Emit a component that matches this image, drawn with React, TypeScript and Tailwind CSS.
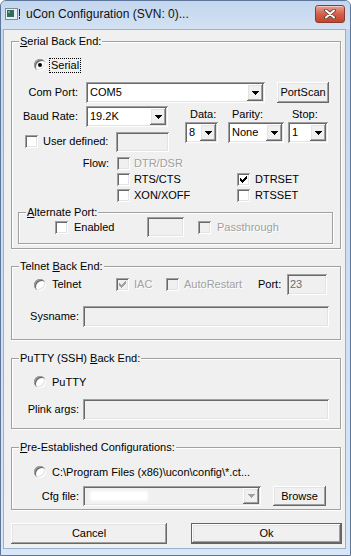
import type { ReactNode } from "react";

const SUNKEN =
  "shadow-[inset_1px_1px_0_#a0a0a0,inset_-1px_-1px_0_#ffffff,inset_2px_2px_0_#696969,inset_-2px_-2px_0_#e3e3e3]";
const RAISED =
  "shadow-[inset_-1px_-1px_0_#696969,inset_1px_1px_0_#ffffff,inset_-2px_-2px_0_#a0a0a0,inset_2px_2px_0_#e3e3e3]";
const GRAYED = "text-[#a0a0a0] [text-shadow:1px_1px_0_#ffffff]";

function Group({
  label,
  className,
  children,
}: {
  label: ReactNode;
  className: string;
  children?: ReactNode;
}) {
  return (
    <div
      className={`relative shrink-0 border border-[#a0a0a0] shadow-[inset_1px_1px_0_#ffffff,1px_1px_0_#ffffff] ${className}`}
    >
      <span className="absolute -top-[7px] left-[7px] bg-[#f0f0f0] px-[1px] leading-[13px] whitespace-nowrap">
        {label}
      </span>
      {children}
    </div>
  );
}

function Radio({ checked }: { checked?: boolean }) {
  return (
    <span
      className={`flex h-[12px] w-[12px] shrink-0 items-center justify-center rounded-full bg-white ${SUNKEN}`}
    >
      {checked && <span className="h-[4px] w-[4px] rounded-full bg-black" />}
    </span>
  );
}

function Check({ checked, disabled }: { checked?: boolean; disabled?: boolean }) {
  return (
    <span
      className={`flex h-[13px] w-[13px] shrink-0 items-center justify-center ${
        disabled ? "bg-[#f0f0f0]" : "bg-white"
      } ${SUNKEN}`}
    >
      {checked && (
        <svg width="7" height="7" viewBox="0 0 7 7" shapeRendering="crispEdges">
          <path
            d="M6 0h1v1h-1z M5 1h2v1h-2z M0 2h1v1h-1z M4 2h3v1h-3z M0 3h2v1h-2z M3 3h3v1h-3z M0 4h5v1h-5z M1 5h3v1h-3z M2 6h1v1h-1z"
            fill={disabled ? "#a0a0a0" : "#000000"}
          />
        </svg>
      )}
    </span>
  );
}

function Arrow({ color = "#000000" }: { color?: string }) {
  return (
    <svg width="7" height="4" viewBox="0 0 7 4" shapeRendering="crispEdges">
      <path d="M0 0h7v1h-7z M1 1h5v1h-5z M2 2h3v1h-3z M3 3h1v1h-1z" fill={color} />
    </svg>
  );
}

function Field({ className, value }: { className: string; value?: string }) {
  return (
    <div
      className={`flex shrink-0 items-center bg-[#f0f0f0] pl-[3px] text-[#6d6d6d] ${SUNKEN} ${className}`}
    >
      {value}
    </div>
  );
}

function Combo({
  className,
  value,
  disabled,
  children,
}: {
  className: string;
  value?: string;
  disabled?: boolean;
  children?: ReactNode;
}) {
  return (
    <div
      className={`flex shrink-0 items-stretch p-[2px] ${disabled ? "bg-[#f0f0f0]" : "bg-white"} ${SUNKEN} ${className}`}
    >
      <span className="flex flex-1 items-center pl-[2px]">
        {value}
        {children}
      </span>
      <span className={`flex w-[16px] items-center justify-center bg-[#f0f0f0] ${RAISED}`}>
        <Arrow color={disabled ? "#a0a0a0" : "#000000"} />
      </span>
    </div>
  );
}

function Button({ className, children }: { className: string; children: ReactNode }) {
  return (
    <div
      className={`flex shrink-0 items-center justify-center bg-[#f0f0f0] ${RAISED} ${className}`}
    >
      {children}
    </div>
  );
}

function TitleBar() {
  return (
    <div className="flex h-[28px] shrink-0 items-start bg-linear-to-b from-[#c2d6ee] to-[#d3e2f3] pl-[4px] pr-[5px]">
      <svg width="16" height="16" viewBox="0 0 16 16" className="mt-[5px] shrink-0">
        <rect x="0.5" y="2.5" width="12" height="11" fill="#e9eef2" stroke="#7d8a96" />
        <rect x="2" y="4" width="7" height="7" fill="#2f6e5c" />
        <rect x="3" y="5" width="2" height="2" fill="#6fae95" />
        <rect x="14" y="3" width="1" height="7" fill="#2a2a2a" />
        <rect x="14" y="11" width="1" height="2" fill="#2a2a2a" />
      </svg>
      <span className="mt-[6px] ml-[5px] flex-1 text-[12px] leading-[15px] text-[#111]">
        uCon Configuration (SVN: 0)...
      </span>
      <div className="mt-[4px] flex h-[18px] w-[30px] items-center justify-center rounded-[3px] border border-[#8e3b2c] bg-linear-to-b from-[#e8a090] via-[#d2604a] to-[#c4432b] shadow-[inset_0_1px_0_rgba(255,255,255,0.45)]">
        <svg width="12" height="10" viewBox="0 0 12 10">
          <path d="M2 1.5 L10 8.5 M10 1.5 L2 8.5" stroke="#4a3b38" strokeWidth="3.6" strokeLinecap="round" />
          <path d="M2 1.5 L10 8.5 M10 1.5 L2 8.5" stroke="#ffffff" strokeWidth="2" strokeLinecap="round" />
        </svg>
      </div>
    </div>
  );
}

function SerialGroup() {
  return (
    <Group
      className="mt-[11px] ml-[7px] h-[208px] w-[330px]"
      label={
        <>
          <u>S</u>erial Back End:
        </>
      }
    >
      <div className="mt-[15px] flex h-[16px] items-center pl-[22px]">
        <Radio checked />
        <span className="ml-[3px] border border-dotted border-black px-[1px] leading-[13px]">
          Serial
        </span>
      </div>

      <div className="mt-[9px] flex h-[21px] items-center">
        <span className="w-[66px] text-right">Com Port:</span>
        <Combo className="ml-[8px] h-[21px] w-[179px]" value="COM5" />
        <Button className="ml-[12px] h-[21px] w-[52px]">PortScan</Button>
      </div>

      <div className="mt-[3px] flex">
        <div className="flex w-[173px] flex-col">
          <div className="flex h-[21px] items-center">
            <span className="w-[66px] text-right">Baud Rate:</span>
            <Combo className="ml-[8px] h-[21px] w-[82px]" value="19.2K" />
          </div>
          <div className="mt-[4px] flex h-[21px] items-center pl-[13px]">
            <div className="flex w-[91px] items-center">
              <Check />
              <span className="ml-[5px]">User defined:</span>
            </div>
            <Field className="h-[20px] w-[53px]" />
          </div>
        </div>
        <div className="flex flex-col">
          <div className="flex h-[16px] items-center">
            <span className="w-[33px] pl-[5px]">Data:</span>
            <span className="ml-[10px] w-[56px] pl-[4px]">Parity:</span>
            <span className="ml-[4px] w-[40px] pl-[4px]">Stop:</span>
          </div>
          <div className="flex h-[21px] items-center">
            <Combo className="h-[21px] w-[33px]" value="8" />
            <Combo className="ml-[10px] h-[21px] w-[56px]" value="None" />
            <Combo className="ml-[4px] h-[21px] w-[40px]" value="1" />
          </div>
        </div>
      </div>

      <div className="mt-[3px] flex flex-col">
        <div className="flex h-[16px] items-center">
          <span className="w-[97px] text-right">Flow:</span>
          <div className="ml-[8px] flex w-[120px] items-center">
            <Check disabled />
            <span className={`ml-[4px] ${GRAYED}`}>DTR/DSR</span>
          </div>
        </div>
        <div className="flex h-[16px] items-center pl-[105px]">
          <div className="flex w-[120px] items-center">
            <Check />
            <span className="ml-[4px]">RTS/CTS</span>
          </div>
          <Check checked />
          <span className="ml-[5px]">DTRSET</span>
        </div>
        <div className="flex h-[16px] items-center pl-[105px]">
          <div className="flex w-[120px] items-center">
            <Check />
            <span className="ml-[4px]">XON/XOFF</span>
          </div>
          <Check />
          <span className="ml-[5px]">RTSSET</span>
        </div>
      </div>

      <Group
        className="mt-[9px] ml-[6px] h-[32px] w-[315px]"
        label={
          <>
            <u>A</u>lternate Port:
          </>
        }
      >
        <div className="mt-[4px] flex h-[20px] items-center pl-[36px]">
          <div className="flex w-[92px] items-center">
            <Check />
            <span className="ml-[6px]">Enabled</span>
          </div>
          <Field className="h-[20px] w-[37px]" />
          <div className="ml-[14px] flex items-center">
            <Check disabled />
            <span className={`ml-[6px] ${GRAYED}`}>Passthrough</span>
          </div>
        </div>
      </Group>
    </Group>
  );
}

function TelnetGroup() {
  return (
    <Group
      className="mt-[17px] ml-[7px] h-[74px] w-[330px]"
      label={
        <>
          Telnet <u>B</u>ack End:
        </>
      }
    >
      <div className="mt-[7px] flex h-[21px] items-center pl-[22px]">
        <div className="flex w-[82px] items-center">
          <Radio />
          <span className="ml-[6px]">Telnet</span>
        </div>
        <div className="flex w-[50px] items-center">
          <Check checked disabled />
          <span className={`ml-[5px] ${GRAYED}`}>IAC</span>
        </div>
        <div className="flex w-[92px] items-center">
          <Check disabled />
          <span className={`ml-[5px] ${GRAYED}`}>AutoRestart</span>
        </div>
        <span className="w-[29px]">Port:</span>
        <Field className="h-[21px] w-[40px]" value="23" />
      </div>
      <div className="mt-[11px] flex h-[21px] items-center">
        <span className="w-[67px] text-right">Sysname:</span>
        <Field className="ml-[4px] h-[21px] w-[246px]" />
      </div>
    </Group>
  );
}

function PuttyGroup() {
  return (
    <Group
      className="mt-[18px] ml-[7px] h-[71px] w-[330px]"
      label={
        <>
          PuTTY (SSH) <u>B</u>ack End:
        </>
      }
    >
      <div className="mt-[15px] flex h-[16px] items-center pl-[22px]">
        <Radio />
        <span className="ml-[6px]">PuTTY</span>
      </div>
      <div className="mt-[9px] flex h-[21px] items-center">
        <span className="w-[67px] text-right">Plink args:</span>
        <Field className="ml-[4px] h-[21px] w-[246px]" />
      </div>
    </Group>
  );
}

function PresetGroup() {
  return (
    <Group
      className="mt-[18px] ml-[7px] h-[63px] w-[330px]"
      label={
        <>
          <u>P</u>re-Established Configurations:
        </>
      }
    >
      <div className="mt-[16px] flex h-[16px] items-center pl-[22px]">
        <Radio />
        <span className="ml-[6px]">{"C:\\Program Files (x86)\\ucon\\config\\*.ct..."}</span>
      </div>
      <div className="mt-[6px] flex h-[20px] items-center">
        <span className="w-[67px] text-right">Cfg file:</span>
        <Combo className="ml-[4px] h-[20px] w-[178px]" disabled>
          <span className="ml-[3px] h-[10px] w-[58px] rounded-[3px] bg-white blur-[1px]" />
        </Combo>
        <Button className="ml-[12px] h-[20px] w-[53px]">Browse</Button>
      </div>
    </Group>
  );
}

export default function App() {
  return (
    <div className="flex h-[556px] w-[351px] flex-col overflow-hidden rounded-t-[6px] border border-[#5d7699] bg-linear-to-b from-[#c2d6ee] to-[#d8e6f5] font-['Liberation_Sans',Arial,sans-serif] text-[11px] leading-[13px] text-black">
      <TitleBar />
      <div className="ml-[2px] flex h-[520px] w-[343px] shrink-0 flex-col border border-[#9ab0cc] bg-[#f0f0f0]">
        <SerialGroup />
        <TelnetGroup />
        <PuttyGroup />
        <PresetGroup />
        <div className="mt-[13px] flex h-[21px]">
          <Button className="ml-[7px] h-[21px] w-[156px]">Cancel</Button>
          <div className="ml-[24px] flex h-[21px] w-[151px] border border-[#646464]">
            <Button className="h-full w-full">Ok</Button>
          </div>
        </div>
      </div>
    </div>
  );
}
